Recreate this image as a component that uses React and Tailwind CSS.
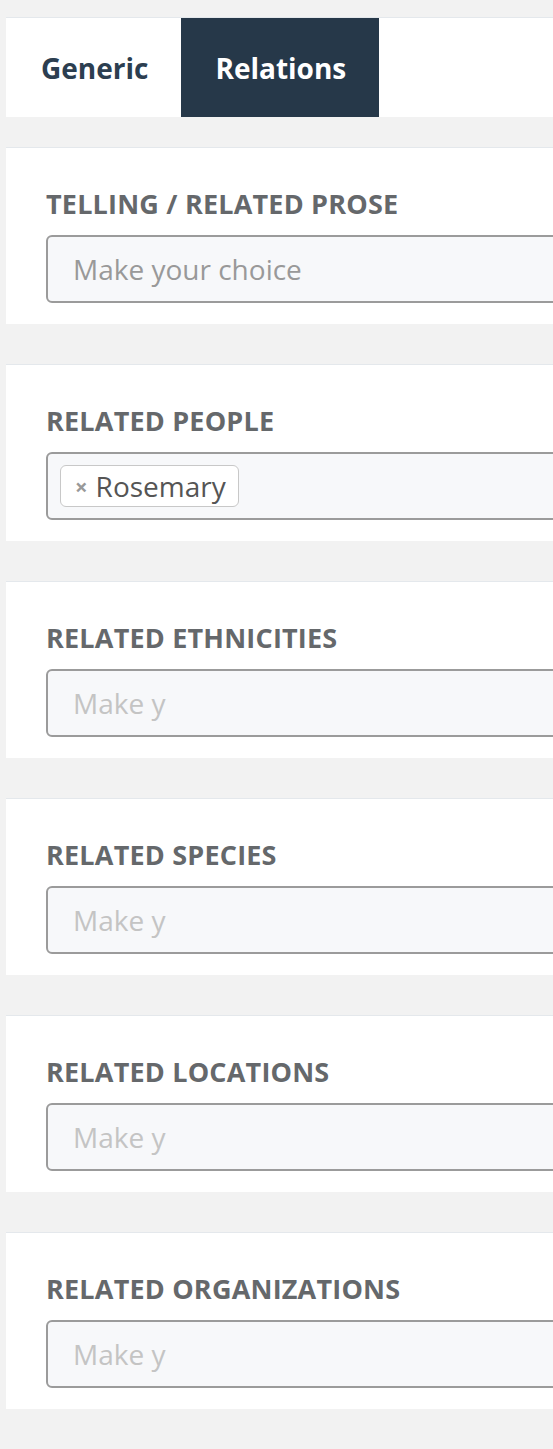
const fields = [
  { label: 'TELLING / RELATED PROSE', placeholder: 'Make your choice', dim: false },
  { label: 'RELATED PEOPLE', tags: ['Rosemary'] },
  { label: 'RELATED ETHNICITIES', placeholder: 'Make y', dim: true },
  { label: 'RELATED SPECIES', placeholder: 'Make y', dim: true },
  { label: 'RELATED LOCATIONS', placeholder: 'Make y', dim: true },
  { label: 'RELATED ORGANIZATIONS', placeholder: 'Make y', dim: true },
];

function Field({ field }) {
  return (
    <section className="w-[900px] border-t border-[#e4e8ec] bg-white px-[40px] pt-[40px] pb-[21px]">
      <h3 className="text-[27px] font-bold leading-[32px] tracking-[0.2px] text-[#65686b]">{field.label}</h3>
      <div className="mt-[15px] flex h-[68px] w-[800px] items-center rounded-[6px] border-2 border-[#9b9b9b] bg-[#f7f8fa] px-[12px]">
        {field.tags ? (
          field.tags.map((t) => (
            <span
              key={t}
              className="flex h-[42px] items-center gap-[8px] rounded-[6px] border border-[#c8c8c8] bg-white pl-[14px] pr-[12px] text-[28px] text-[#555]"
            >
              <span className="text-[22px] font-bold text-[#999]">×</span>
              {t}
            </span>
          ))
        ) : (
          <span className={`pl-[13px] text-[28px] ${field.dim ? 'text-[#c4c4c4]' : 'text-[#999]'}`}>
            {field.placeholder}
          </span>
        )}
      </div>
    </section>
  );
}

export default function App() {
  return (
    <div className="min-h-[1449px] w-[553px] overflow-hidden bg-[#f2f2f2] pt-[17px] pl-[6px] font-['Open_Sans',sans-serif]">
      <nav className="flex h-[100px] w-[900px] border-t border-[#e4e8ec] bg-white">
        <button type="button" className="pl-[35px] pr-[33px] pt-[1px] text-[28px] font-bold text-[#2c3e50]">
          Generic
        </button>
        <button type="button" className="bg-[#263849] pl-[34px] pr-[33px] pt-[1px] text-[28px] font-bold text-white">
          Relations
        </button>
      </nav>
      <div className="mt-[30px] flex flex-col gap-[40px]">
        {fields.map((f) => (
          <Field key={f.label} field={f} />
        ))}
      </div>
    </div>
  );
}
